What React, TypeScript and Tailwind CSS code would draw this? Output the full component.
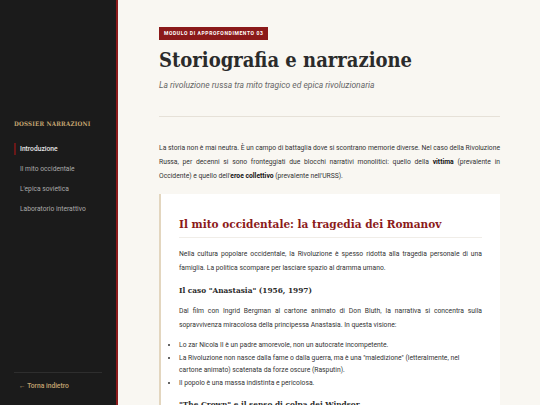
import React from "react";

const serif = { fontFamily: '"DejaVu Serif Condensed", "DejaVu Serif", serif' };

export default function App() {
  return (
    <div className="flex h-[405px] w-[540px] overflow-hidden" style={{ fontFamily: 'Roboto, "Liberation Sans", sans-serif' }}>
      <aside className="flex h-full w-[118px] shrink-0 flex-col border-r-2 border-[#8b1a1a] bg-[#1b1b1b] px-[14px] pt-[119px] pb-[14px]">
        <div className="text-[6.2px] font-bold leading-[9px] tracking-[0.03em] text-[#c5a572]" style={serif}>DOSSIER NARRAZIONI</div>
        <nav className="mt-[15px] flex flex-col gap-[8px] text-[6.7px]">
          <div className="flex h-[12px] items-center border-l-2 border-[#6b1818] pl-[4px] font-medium text-[#e6e6e6]">Introduzione</div>
          <div className="flex h-[12px] items-center pl-[6px] text-[#aaaaaa]">Il mito occidentale</div>
          <div className="flex h-[12px] items-center pl-[6px] text-[#aaaaaa]">L'epica sovietica</div>
          <div className="flex h-[12px] items-center pl-[6px] text-[#aaaaaa]">Laboratorio interattivo</div>
        </nav>
        <div className="mt-auto border-t border-[#2e2e2e] pt-[8px] pl-[5px] text-[6.7px] font-medium text-[#c5a572]">← Torna indietro</div>
      </aside>
      <main className="flex-1 bg-[#f9f7f2] pl-[41px] pr-[40px] pt-[27px]">
        <div className="w-fit bg-[#8b1a1a] px-[5px] py-[4px] text-[5px] font-bold leading-[5px] tracking-[0.12em] text-white">MODULO DI APPROFONDIMENTO 03</div>
        <h1 className="mt-[7px] text-[20px] font-bold leading-[26px] text-[#2b2b2b]" style={serif}>Storiografia e narrazione</h1>
        <p className="mt-[6px] text-[8.5px] italic leading-[12px] text-[#666]">La rivoluzione russa tra mito tragico ed epica rivoluzionaria</p>
        <div className="mt-[25px] border-t border-[#e6e1d8]" />
        <p className="mt-[24px] text-justify text-[6.75px] leading-[14px] text-[#333]">
          La storia non è mai neutra. È un campo di battaglia dove si scontrano memorie diverse. Nel caso della Rivoluzione Russa, per decenni si sono fronteggiati due blocchi narrativi monolitici: quello della <b className="text-[#111]">vittima</b> (prevalente in Occidente) e quello dell'<b className="text-[#111]">eroe collettivo</b> (prevalente nell'URSS).
        </p>
        <section className="mt-[11px] border-l-2 border-[#e3d6bf] bg-white px-[18px] pt-[22px] pb-[20px]">
          <h2 className="text-[11.7px] font-bold leading-[16px] text-[#8b1a1a]" style={serif}>Il mito occidentale: la tragedia dei Romanov</h2>
          <div className="mt-[5px] border-t border-[#f0ede8]" />
          <p className="mt-[9px] text-justify text-[6.75px] leading-[14px] text-[#333]">
            Nella cultura popolare occidentale, la Rivoluzione è spesso ridotta alla tragedia personale di una famiglia. La politica scompare per lasciare spazio al dramma umano.
          </p>
          <h3 className="mt-[8px] text-[8.2px] font-bold leading-[14px] text-[#2b2b2b]" style={serif}>Il caso "Anastasia" (1956, 1997)</h3>
          <p className="mt-[7px] text-justify text-[6.75px] leading-[14px] text-[#333]">
            Dal film con Ingrid Bergman al cartone animato di Don Bluth, la narrativa si concentra sulla sopravvivenza miracolosa della principessa Anastasia. In questa visione:
          </p>
          <ul className="mt-[7px] list-outside list-disc pl-0 pr-[16px] text-[6.75px] leading-[12.5px] text-[#333]">
            <li>Lo zar Nicola II è un padre amorevole, non un autocrate incompetente.</li>
            <li>La Rivoluzione non nasce dalla fame o dalla guerra, ma è una "maledizione" (letteralmente, nel cartone animato) scatenata da forze oscure (Rasputin).</li>
            <li>Il popolo è una massa indistinta e pericolosa.</li>
          </ul>
          <h3 className="mt-[8px] text-[8.2px] font-bold leading-[14px] text-[#2b2b2b]" style={serif}>"The Crown" e il senso di colpa dei Windsor</h3>
        </section>
      </main>
    </div>
  );
}
